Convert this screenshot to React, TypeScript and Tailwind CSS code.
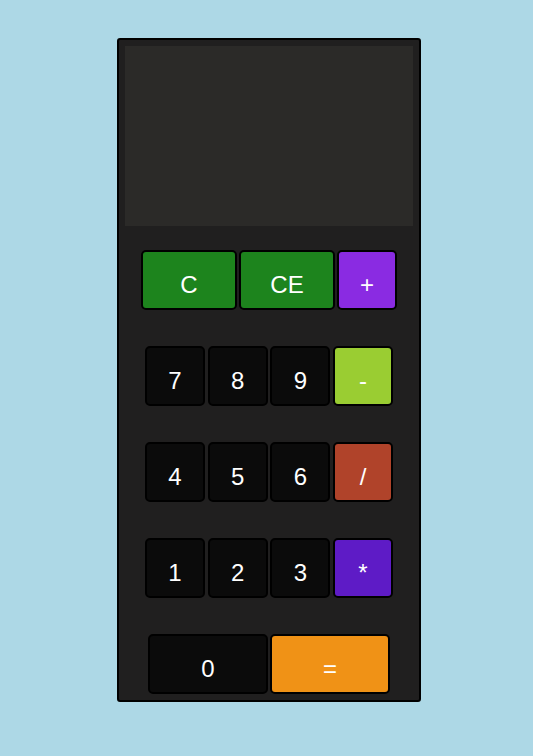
import React from "react";

const base =
  "flex items-center justify-center pt-[9px] h-[60px] border-2 border-black rounded-[5px] text-white text-[24px] leading-none";

function Btn({ label, cls }: { label: string; cls: string }) {
  return <button className={`${base} ${cls}`}>{label}</button>;
}

export default function App() {
  const digit = "w-[60px] bg-[#0b0b0b]";
  return (
    <div
      className="min-h-[756px] w-full bg-[#add8e6] flex justify-start pt-[38px] pl-[117px]"
      style={{ fontFamily: '"Liberation Sans", Arial, sans-serif' }}
    >
      <div className="w-[304px] h-[664px] bg-[#201f1f] border-2 border-black rounded-[3px] p-[6px] flex flex-col items-center">
        <div className="w-[288px] h-[180px] bg-[#2b2a28] shrink-0" />
        <div className="flex flex-col gap-[36px] mt-[24px]">
          <div className="flex gap-[2px] justify-center">
            <Btn label="C" cls="w-[96px] bg-[#1d841d]" />
            <Btn label="CE" cls="w-[96px] bg-[#1d841d]" />
            <Btn label="+" cls="w-[60px] bg-[#8a2be2]" />
          </div>
          <div className="flex gap-[2.67px] justify-center">
            <Btn label="7" cls={digit} />
            <Btn label="8" cls={digit} />
            <Btn label="9" cls={digit} />
            <Btn label="-" cls="w-[60px] bg-[#9acd32]" />
          </div>
          <div className="flex gap-[2.67px] justify-center">
            <Btn label="4" cls={digit} />
            <Btn label="5" cls={digit} />
            <Btn label="6" cls={digit} />
            <Btn label="/" cls="w-[60px] bg-[#b0432a]" />
          </div>
          <div className="flex gap-[2.67px] justify-center">
            <Btn label="1" cls={digit} />
            <Btn label="2" cls={digit} />
            <Btn label="3" cls={digit} />
            <Btn label="*" cls="w-[60px] bg-[#5e1bc6]" />
          </div>
          <div className="flex gap-[2px] justify-center">
            <Btn label="0" cls="w-[120px] bg-[#0b0b0b]" />
            <Btn label="=" cls="w-[120px] bg-[#f09216]" />
          </div>
        </div>
      </div>
    </div>
  );
}
